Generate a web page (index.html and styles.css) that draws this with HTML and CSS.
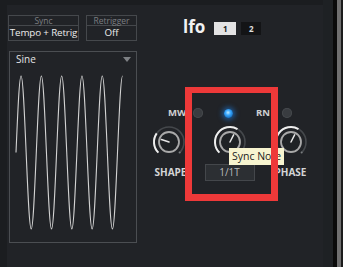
FILE: index.html
```html
<!DOCTYPE html>
<html>
<head>
<meta charset="utf-8">
<link rel="stylesheet" href="styles.css">
</head>
<body>
<div class="screen">
  <div class="panel">
    <div class="left">
      <div class="params">
        <div class="param sync"><div class="ph">Sync</div><div class="pv">Tempo + Retrig</div></div>
        <div class="param retrig"><div class="ph">Retrigger</div><div class="pv">Off</div></div>
      </div>
      <div class="wavebox">
        <div class="wavehead"><span>Sine</span><span class="caret"></span></div>
        <svg class="wave" width="126" height="175" viewBox="10 67 126 175">
          <path d="M16 152.5c1.695 -39.09 3.248 -76.5 5.075 -76.5
            s3.38 37.41 5.075 76.5 s3.248 76.5 5.075 76.5 s3.38 -37.41 5.075 -76.5 s3.248 -76.5 5.075 -76.5
            s3.38 37.41 5.075 76.5 s3.248 76.5 5.075 76.5 s3.38 -37.41 5.075 -76.5 s3.248 -76.5 5.075 -76.5
            s3.38 37.41 5.075 76.5 s3.248 76.5 5.075 76.5 s3.38 -37.41 5.075 -76.5 s3.248 -76.5 5.075 -76.5
            s3.38 37.41 5.075 76.5 s3.248 76.5 5.075 76.5 s3.38 -37.41 5.075 -76.5 s3.248 -76.5 5.075 -76.5
            s3.38 37.41 5.075 76.5 s3.248 76.5 5.075 76.5 s3.38 -37.41 5.075 -76.5 s3.248 -76.5 5.075 -76.5"
            fill="none" stroke="#d2d2d2" stroke-width="1.1"/>
        </svg>
      </div>
    </div>
    <div class="right">
      <div class="title"><span class="lfo">lfo</span><span class="tab on">1</span><span class="tab off">2</span></div>
      <div class="ledrow">
        <span class="lbl mw">MW</span>
        <span class="led dim l1"></span>
        <span class="led blue"></span>
        <span class="lbl rn">RN</span>
        <span class="led dim l3"></span>
      </div>
      <div class="knobrow">
        <svg class="knob" width="36" height="36" viewBox="0 0 36 36">
          <path d="M7.39 28.61A15 15 0 1 1 28.61 28.61" fill="none" stroke="#45484c" stroke-width="1.6"/>
          <circle cx="28.61" cy="28.61" r="1" fill="#7a7d80"/>
          <path d="M7.39 28.61A15 15 0 0 1 5.71 9.40" fill="none" stroke="#eeeeee" stroke-width="2"/>
          <circle cx="18" cy="18" r="10" fill="#1f2225" stroke="#a9a9a9" stroke-width="1.8"/>
          <line x1="18" y1="18" x2="10.4" y2="15.5" stroke="#e6e6e6" stroke-width="1.5" stroke-linecap="round"/>
        </svg>
        <svg class="knob" width="36" height="36" viewBox="0 0 36 36">
          <path d="M7.39 28.61A15 15 0 1 1 28.61 28.61" fill="none" stroke="#45484c" stroke-width="1.6"/>
          <circle cx="28.61" cy="28.61" r="1" fill="#7a7d80"/>
          <path d="M7.39 28.61A15 15 0 0 1 25.5 5.01" fill="none" stroke="#eeeeee" stroke-width="2"/>
          <circle cx="18" cy="18" r="10" fill="#1f2225" stroke="#a9a9a9" stroke-width="1.8"/>
          <line x1="18" y1="18" x2="21.6" y2="10.9" stroke="#e6e6e6" stroke-width="1.5" stroke-linecap="round"/>
        </svg>
        <svg class="knob" width="36" height="36" viewBox="0 0 36 36">
          <path d="M7.39 28.61A15 15 0 1 1 28.61 28.61" fill="none" stroke="#45484c" stroke-width="1.6"/>
          <circle cx="28.61" cy="28.61" r="1" fill="#7a7d80"/>
          <path d="M7.39 28.61A15 15 0 0 1 25.5 5.01" fill="none" stroke="#eeeeee" stroke-width="2"/>
          <circle cx="18" cy="18" r="10" fill="#1f2225" stroke="#a9a9a9" stroke-width="1.8"/>
          <line x1="18" y1="18" x2="21.6" y2="10.9" stroke="#e6e6e6" stroke-width="1.5" stroke-linecap="round"/>
        </svg>
      </div>
      <div class="labelrow">
        <span class="klabel shape">SHAPE</span>
        <span class="valbox">1/1T</span>
        <span class="klabel">PHASE</span>
      </div>
    </div>
    <div class="tooltip">Sync Note</div>
    <div class="highlight"></div>
  </div>
  <div class="gutter"></div>
  <div class="sep-black"></div>
  <div class="sep-gray"></div>
  <div class="sep-end"></div>
</div>
</body>
</html>
```
FILE: styles.css
```css
* { box-sizing: border-box; }
html, body { margin: 0; padding: 0; }
body {
  background: #1b1d20;
  font-family: "Open Sans", "Noto Sans", sans-serif;
  width: 343px;
  height: 267px;
  overflow: hidden;
}
.screen {
  display: flex;
  height: 267px;
}
.panel {
  position: relative;
  margin: 5px 0 0 7px;
  width: 316px;
  height: 262px;
  background: #212327;
  padding-left: 1px;
  display: flex;
}
.left {
  width: 130px;
  padding-top: 10px;
  flex: none;
}
.params {
  display: flex;
  gap: 7px;
}
.param {
  border: 1px solid #45484c;
  height: 26px;
}
.sync { width: 71px; }
.retrig { width: 51px; }
.ph {
  height: 10px;
  border-bottom: 1px solid #45484c;
  font-size: 8.5px;
  line-height: 9px;
  color: #7b7e82;
  text-align: center;
  white-space: nowrap;
}
.pv {
  height: 14px;
  line-height: 14px;
  font-size: 9.8px;
  color: #ececec;
  text-align: center;
  white-space: nowrap;
  letter-spacing: -0.15px;
}
.wavebox {
  margin: 10px 0 0 1px;
  width: 128px;
  height: 192px;
  border: 1px solid #4b4e52;
}
.wavehead {
  height: 15px;
  line-height: 15px;
  font-size: 10px;
  color: #e4e4e4;
  padding: 0 5px 0 6px;
  display: flex;
  justify-content: space-between;
  align-items: center;
}
.caret {
  width: 0;
  height: 0;
  border-left: 4px solid transparent;
  border-right: 4px solid transparent;
  border-top: 5px solid #7e8185;
}
.wave { display: block; }
.right {
  flex: 1;
  padding-top: 17px;
}
.title {
  display: flex;
  align-items: flex-start;
  height: 13px;
  padding-left: 45px;
}
.lfo {
  font-weight: 700;
  font-size: 17px;
  line-height: 13px;
  margin-top: -2px;
  color: #f2f2f2;
  margin-right: 9px;
}
.tab {
  height: 13px;
  line-height: 13px;
  font-size: 8px;
  font-weight: 700;
  text-align: center;
}
.tab.on {
  width: 22px;
  background: #e3e3e3;
  color: #202020;
  margin-right: 5px;
}
.tab.off {
  width: 20px;
  background: #131416;
  color: #e0e0e0;
}
.ledrow {
  margin-top: 73px;
  height: 10px;
  display: flex;
  align-items: center;
}
.lbl {
  font-size: 9.5px;
  font-weight: 700;
  color: #cfd0d1;
  line-height: 10px;
  white-space: nowrap;
}
.mw { margin-left: 30px; width: 17px; }
.rn { margin-left: 23px; width: 15px; }
.led {
  width: 10px;
  height: 10px;
  border-radius: 50%;
  flex: none;
}
.led.dim {
  background: #393c40;
  box-shadow: inset 0 0 0 1px #45484c;
}
.l1 { margin-left: 8px; }
.l3 { margin-left: 11px; }
.led.blue {
  margin-left: 21px;
  width: 9px;
  height: 9px;
  background: radial-gradient(circle at 45% 40%, #bfeaff 0, #39a8ff 35%, #0d5fae 85%);
  box-shadow: 0 0 5px 2px rgba(30, 140, 255, 0.5);
}
.knobrow {
  margin-top: 6px;
  display: grid;
  grid-template-columns: 61px 61px 61px;
  height: 36px;
}
.knob {
  display: block;
  justify-self: center;
}
.labelrow {
  margin-top: 4px;
  display: grid;
  grid-template-columns: 61px 61px 61px;
  height: 17px;
  align-items: center;
}
.klabel {
  text-align: center;
  font-size: 10px;
  font-weight: 700;
  color: #d4d5d6;
  line-height: 17px;
}
.shape { padding-left: 4px; }
.valbox {
  justify-self: center;
  width: 50px;
  height: 17px;
  background: #2c2f33;
  border: 1px solid #44474b;
  font-size: 10px;
  line-height: 15px;
  color: #b9babc;
  text-align: center;
}
.tooltip {
  position: absolute;
  left: 222px;
  top: 143px;
  width: 55px;
  height: 17px;
  background: #f7f4cf;
  color: #1c1c1c;
  font-size: 10.5px;
  line-height: 17px;
  padding-left: 3px;
  white-space: nowrap;
}
.highlight {
  position: absolute;
  left: 178px;
  top: 82px;
  width: 93px;
  height: 114px;
  border: 7px solid #ee3939;
  border-top-width: 6px;
}
.gutter { width: 10px; background: #1e2124; flex: none; }
.sep-black { width: 4px; background: #0a0a0a; flex: none; }
.sep-gray { width: 4px; background: #6f6f6f; flex: none; }
.sep-end { width: 2px; background: #1b1b1b; flex: none; }
```
